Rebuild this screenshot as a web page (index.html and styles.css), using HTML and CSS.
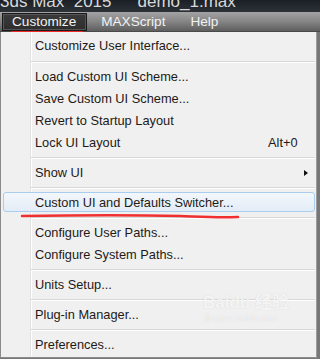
FILE: index.html
```html
<!DOCTYPE html>
<html lang="en">

<head>
    <meta charset="UTF-8">
    <meta name="viewport" content="width=device-width, initial-scale=1.0">
    <title>Customize menu</title>
    <link rel="stylesheet" href="styles.css">
</head>

<body>
    <div class="title-bar">
        <span class="app-name">3ds Max&nbsp; 2015</span>
        <span class="file-name">demo_1.max</span>
    </div>
    <div class="menu-bar">
        <span class="menu-title active">Customize</span>
        <span class="menu-title">MAXScript</span>
        <span class="menu-title">Help</span>
        <span class="mark mark-top"></span>
    </div>
    <div class="dropdown">
        <div class="item">Customize User Interface...</div>
        <div class="sep first"></div>
        <div class="item">Load Custom UI Scheme...</div>
        <div class="item">Save Custom UI Scheme...</div>
        <div class="item">Revert to Startup Layout</div>
        <div class="item">Lock UI Layout <span class="shortcut">Alt+0</span></div>
        <div class="sep"></div>
        <div class="item">Show UI <span class="arrow"></span></div>
        <div class="sep"></div>
        <div class="item hover">Custom UI and Defaults Switcher...</div>
        <div class="sep"></div>
        <div class="item">Configure User Paths...</div>
        <div class="item">Configure System Paths...</div>
        <div class="sep"></div>
        <div class="item">Units Setup...</div>
        <div class="sep"></div>
        <div class="item">Plug-in Manager...</div>
        <div class="sep"></div>
        <div class="item">Preferences...</div>

        <svg class="mark mark-mid" width="230" height="8" viewBox="0 0 230 8">
            <path d="M2 3 C60 2 120 2 160 3 C185 4 200 5 218 4" stroke="#f03030" stroke-width="2.4" fill="none" stroke-linecap="round" />
        </svg>
        <div class="watermark">
            <span class="wm-logo">Bai<b>du</b> 经验</span>
            <span class="wm-url">jingyan.baidu.com</span>
        </div>
    </div>
</body>

</html>
```

FILE: styles.css
```css
body {
    margin: 0;
    width: 320px;
    height: 359px;
    overflow: hidden;
    background-color: #777;
    font-family: "Liberation Sans", Arial, sans-serif;
}

/* dark window title, cut at the top */
.title-bar {
    height: 12px;
    overflow: hidden;
    display: flex;
    align-items: flex-end;
    gap: 26px;
    background: linear-gradient(#1c2026, #2c3239);
    color: #d8d8d8;
    font-size: 17px;
    line-height: 12px;
}

.title-bar span {
    display: block;
    height: 12px;
    line-height: 4px;
}

.menu-bar {
    position: relative;
    height: 20px;
    display: flex;
    align-items: center;
    background: linear-gradient(#a3a3a3, #858585 50%, #5e5e5e);
    border-bottom: 1px solid #4a4a4a;
    box-sizing: border-box;
    padding-left: 2px;
}

.menu-title {
    color: #f2f2f2;
    font-size: 13.6px;
    padding: 0 11px 0 14px;
    line-height: 16px;
}

.menu-title.active {
    background: linear-gradient(#3a3a3a, #2e2e2e);
    border: 1px solid #1a1a1a;
    box-shadow: inset 0 0 0 1px #555;
    padding: 0 10px 0 9px;
}

.mark-top {
    position: absolute;
    left: 11px;
    top: 19px;
    width: 72px;
    height: 2px;
    background-color: #f02828;
    border-radius: 1px;
}

.dropdown {
    position: relative;
    width: 317px;
    height: 326px;
    box-sizing: border-box;
    padding-top: 3px;
    background-color: #f0f0f0;
    border-left: 1px solid #8c8c8c;
    border-right: 1px solid #9c9c9c;
    border-bottom: 1px solid #8c8c8c;
    background-image: linear-gradient(to right, transparent 29px, #e2e2e2 29px, #e2e2e2 30px, #fff 30px, #fff 31px, transparent 31px);
}

.item {
    position: relative;
    height: 22px;
    line-height: 22px;
    padding-left: 34px;
    font-size: 12.8px;
    color: #1e1a16;
}

.item.hover {
    margin: 0 0 0 2px;
    width: 312px;
    height: 20px;
    line-height: 20px;
    padding-left: 31px;
    box-sizing: border-box;
    border: 1px solid #a9cdef;
    border-radius: 3px;
    background: linear-gradient(#f3f7fc, #e3ecf7);
    margin-bottom: 2px;
}

.shortcut {
    position: absolute;
    left: 267px;
}

.arrow {
    position: absolute;
    left: 303px;
    top: 8px;
    border-left: 4px solid #111;
    border-top: 3.5px solid transparent;
    border-bottom: 3.5px solid transparent;
}

.sep {
    height: 8px;
    margin-left: 30px;
    margin-right: 1px;
    background: linear-gradient(transparent 3px, #d8d8d8 3px, #d8d8d8 4px, #fff 4px, #fff 5px, transparent 5px);
}

.sep.first {
    height: 9px;
    background: linear-gradient(transparent 4px, #d8d8d8 4px, #d8d8d8 5px, #fff 5px, #fff 6px, transparent 6px);
}

.mark-mid {
    position: absolute;
    left: 19px;
    top: 181px;
}

.watermark {
    position: absolute;
    left: 202px;
    top: 256px;
    display: flex;
    flex-direction: column;
    color: rgba(255, 255, 255, 0.75);
    text-shadow: 0 0 1px rgba(180, 180, 180, 0.5);
}

.wm-logo {
    font-size: 17px;
    font-weight: bold;
    font-family: "Liberation Sans", "Noto Sans CJK SC", sans-serif;
}

.wm-url {
    font-size: 9px;
    margin-left: 2px;
}
```
